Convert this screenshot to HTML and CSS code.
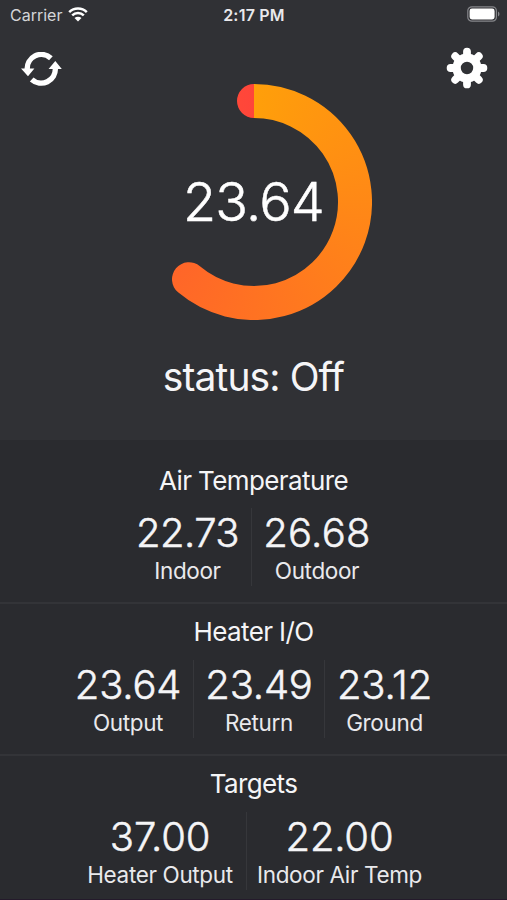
FILE: index.html
```html
<!DOCTYPE html>
<html lang="en">
<head>
<meta charset="utf-8">
<meta name="viewport" content="width=device-width">
<title>Heater</title>
<link rel="stylesheet" href="styles.css">
</head>
<body>
<main class="screen">
  <section class="hero">
    <header class="status-bar">
      <div class="carrier"><span>Carrier</span>
        <svg class="wifi" viewBox="0 0 20 15" width="20" height="15"><path d="M1.2 5.2a12.4 12.4 0 0 1 17.6 0M4.2 8.4a8.2 8.2 0 0 1 11.6 0" fill="none" stroke="#fff" stroke-width="2.5"/><path d="M10 14.600 6.500 11.100a5 5 0 0 1 7 0z" fill="#fff"/></svg>
      </div>
      <div class="time">2:17 PM</div>
      <svg class="battery" viewBox="0 0 33 16" width="33" height="16"><rect x=".8" y=".8" width="28.600" height="14.400" rx="4" fill="none" stroke="#85868a" stroke-width="1.200"/><rect x="2.600" y="2.600" width="25" height="10.800" rx="2.400" fill="#fff"/><path d="M31 5.500q1.500.8 1.500 2.500T31 10.500z" fill="#85868a"/></svg>
    </header>
    <nav class="actions">
      <svg class="refresh" viewBox="0 0 41 34" width="41" height="34"><g fill="none" stroke="#fff" stroke-width="5.400"><path d="M29.900 6.200A14.100 14.100 0 0 0 6.300 18"/><path d="M10.700 27.400A14.100 14.100 0 0 0 34.300 16"/></g><path d="M0 16.500H13.400L7 24.200zM27.600 17H40.800L34.300 9z" fill="#fff"/></svg>
      <svg class="gear" viewBox="-21 -21 42 42" width="42" height="42"><g stroke="#fff" stroke-width="7.800" stroke-linecap="round"><path d="M0-16.400V-11M0 16.400V11M-16.400 0H-11M16.400 0H11M-11.800-11.800-8-8M11.800 11.800 8 8M11.800-11.800 8-8M-11.800 11.800-8 8"/></g><circle r="10.400" fill="none" stroke="#fff" stroke-width="8.400"/></svg>
    </nav>
    <div class="gauge">
      <svg class="ring" viewBox="0 0 236 236" width="236" height="236">
        <mask id="arc" maskUnits="userSpaceOnUse" x="0" y="0" width="236" height="236"><path d="M118 17A101 101 0 1 1 53 195.300" fill="none" stroke="#fff" stroke-width="34" stroke-linecap="round"/></mask>
        <g mask="url(#arc)"><foreignObject width="236" height="236"><div class="sweep"></div></foreignObject></g>
      </svg>
      <span class="reading">23.64</span>
    </div>
    <div class="state">status: Off</div>
  </section>
  <section class="group first">
    <h2>Air Temperature</h2>
    <div class="row air">
      <div class="stat"><b class="tight">22.73</b><span>Indoor</span></div><i></i>
      <div class="stat"><b class="loose">26.68</b><span>Outdoor</span></div>
    </div>
  </section>
  <section class="group">
    <h2>Heater I/O</h2>
    <div class="row io">
      <div class="stat"><b>23.64</b><span>Output</span></div><i></i>
      <div class="stat"><b>23.49</b><span>Return</span></div><i></i>
      <div class="stat"><b>23.12</b><span>Ground</span></div>
    </div>
  </section>
  <section class="group">
    <h2>Targets</h2>
    <div class="row targets">
      <div class="stat"><b>37.00</b><span>Heater Output</span></div><i></i>
      <div class="stat"><b>22.00</b><span>Indoor Air Temp</span></div>
    </div>
  </section>
</main>
</body>
</html>
```
FILE: styles.css
```css
* { box-sizing: border-box; }
body { margin: 0; background: #2a2b2f; color: #f5f5f7; font-family: Inter, "Liberation Sans", sans-serif; }
svg { display: block; }
.screen { width: 507px; height: 900px; overflow: hidden; border-bottom: 1px solid #241a2b; }
.hero { height: 440px; background: #303135; }
.status-bar { height: 30px; padding: 0 7px 0 10px; display: grid; grid-template-columns: 1fr auto 1fr; align-items: center; }
.carrier { display: flex; align-items: center; gap: 6px; font-size: 16px; letter-spacing: 0; color: #d4d5d8; }
.wifi { margin-top: -2px; }
.time { margin: -1px 2px 0 0; font-size: 16px; font-weight: 600; letter-spacing: .2px; color: #e9e9ec; }
.battery { justify-self: end; margin-top: -2px; }
.actions { height: 54px; padding: 17px 19px 0 21px; display: flex; justify-content: space-between; }
.refresh { margin-top: 5px; }
.gauge { width: 236px; height: 236px; margin: 0 auto; display: grid; place-items: center; }
.gauge > * { grid-area: 1 / 1; }
.sweep { width: 236px; height: 236px; background: conic-gradient(#ff9f0a, #ff453a); }
.reading { padding-bottom: 2px; font-size: 54px; font-weight: 300; letter-spacing: -.8px; color: #fff; -webkit-text-stroke: .5px #fff; }
.state { margin-top: 32px; text-align: center; font-size: 39px; font-weight: 380; letter-spacing: -.9px; line-height: 50px; }
.group { height: 152px; padding-top: 13px; border-top: 2px solid #333438; }
.group.first { height: 162px; padding-top: 26px; border-top: 0; }
h2 { margin: 0; font-weight: 380; font-size: 26px; letter-spacing: -.6px; line-height: 30px; text-align: center; }
.row { margin-top: 12px; height: 78px; display: grid; column-gap: 12px; justify-content: center; }
.io, .targets { margin-top: 13px; }
.air { grid-template-columns: 102px 1px 107px; }
.io { grid-template-columns: 106px 1px 106px 1px 95px; }
.targets { grid-template-columns: 147px 1px 162px; }
.row i { background: #36373b; }
.stat { display: flex; flex-direction: column; align-items: center; white-space: nowrap; }
.stat b { font-size: 40px; font-weight: 300; letter-spacing: -.2px; line-height: 49px; -webkit-text-stroke: .5px #f5f5f7; }
.stat b.tight { letter-spacing: -.6px; }
.stat b.loose { letter-spacing: .3px; }
.stat span { font-size: 22.5px; font-weight: 380; letter-spacing: -.35px; line-height: 27px; color: #e9e9ec; }
```
